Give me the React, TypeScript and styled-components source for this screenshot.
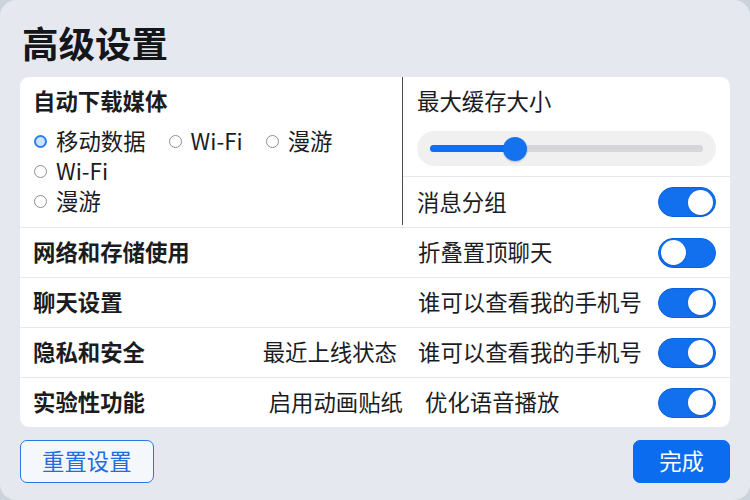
import React from "react";
import styled, { createGlobalStyle } from "styled-components";

const Global = createGlobalStyle`
  html, body { margin: 0; padding: 0; background: #cdd3da; }
  body { font-family: "Noto Sans CJK SC", "Noto Sans", sans-serif; color: #1b1c1f; }
  * { box-sizing: border-box; }
`;

const Page = styled.div`
  width: 750px;
  height: 500px;
  background: #e5e9ef;
  border-radius: 16px;
  padding: 19px 20px 0 20px;
  display: flex;
  flex-direction: column;
  overflow: hidden;
`;

const Title = styled.h1`
  margin: 0 0 0 2px;
  font-size: 36.5px;
  line-height: 48px;
  font-weight: 700;
  color: #15161a;
`;

const Card = styled.div`
  margin-top: 10px;
  background: #ffffff;
  border-radius: 9px;
  overflow: hidden;
`;

const Top = styled.div`
  display: grid;
  grid-template-columns: 383px 1fr;
  height: 150px;
`;

const LeftCell = styled.div`
  border-right: 1px solid #4a4b50;
  padding: 8px 13px 0 13px;
  margin-bottom: 2px;
`;

const RightCell = styled.div`
  display: flex;
  flex-direction: column;
`;

const SliderBlock = styled.div`
  height: 100px;
  border-bottom: 1px solid #e4e8ef;
  padding: 8px 14px 0 14px;
`;

const Heading = styled.div<{ $bold?: boolean }>`
  font-size: 22.4px;
  line-height: 30px;
  font-weight: ${(p) => (p.$bold ? 700 : 400)};
  white-space: nowrap;
`;

const RadioGroup = styled.div`
  margin-top: 10px;
  display: flex;
  flex-direction: column;
`;

const RadioLine = styled.div`
  display: flex;
  gap: 22px;
  height: 30px;
  align-items: center;
`;

const RadioItem = styled.label`
  display: flex;
  align-items: center;
  gap: 9px;
  font-size: 22.4px;
  line-height: 30px;
`;

const RadioDot = styled.span<{ $on?: boolean }>`
  width: 13px;
  height: 13px;
  border-radius: 50%;
  border: ${(p) => (p.$on ? "2px solid #2b7ff2" : "1.5px solid #8d8f94")};
  background: ${(p) => (p.$on ? "#cfe3ff" : "#ffffff")};
  flex: none;
  margin: 2px 0 0 1px;
`;

const SliderBox = styled.div`
  margin-top: 16px;
  height: 35px;
  border-radius: 18px;
  background: #f0f0f1;
  padding: 0 13px;
  display: flex;
  align-items: center;
`;

const Track = styled.div`
  position: relative;
  flex: 1;
  height: 7px;
  border-radius: 4px;
  background: #d6d6d8;
`;

const Fill = styled.div`
  position: absolute;
  left: 0;
  top: 0;
  bottom: 0;
  border-radius: 4px;
  background: #0f6ff0;
`;

const Knob = styled.div`
  position: absolute;
  top: 50%;
  width: 24px;
  height: 24px;
  margin: -12px 0 0 -12px;
  border-radius: 50%;
  background: #1472ef;
  box-shadow: 0 1px 2px rgba(0, 0, 0, 0.2);
`;

const SubRow = styled.div`
  flex: 1;
  display: flex;
  align-items: center;
  justify-content: space-between;
  padding: 0 14px 0 14px;
`;

const Row = styled.div`
  height: 50px;
  border-top: 1px solid #e4e8ef;
  display: flex;
  align-items: center;
  padding: 0 14px 0 13px;
`;

const RowLabel = styled.div`
  flex: 1;
  font-size: 22.4px;
  font-weight: 700;
  white-space: nowrap;
  margin-top: -3px;
`;

const Middle = styled.div<{ $gap: number }>`
  font-size: 22.4px;
  white-space: nowrap;
  margin-right: ${(p) => p.$gap}px;
  margin-top: -3px;
`;

const RightGroup = styled.div<{ $w: number }>`
  width: ${(p) => p.$w}px;
  display: flex;
  align-items: center;
  justify-content: space-between;
`;

const Text = styled.div`
  font-size: 22.4px;
  white-space: nowrap;
  margin-top: -3px;
`;

const ToggleTrack = styled.div<{ $on: boolean }>`
  width: 58px;
  height: 30px;
  border-radius: 15px;
  background: #1270ef;
  border: 1.5px solid #0c62dc;
  display: flex;
  align-items: center;
  justify-content: ${(p) => (p.$on ? "flex-end" : "flex-start")};
  padding: 0 2px;
  flex: none;
`;

const ToggleThumb = styled.div`
  width: 25px;
  height: 25px;
  border-radius: 50%;
  background: #ffffff;
  box-shadow: 0 1px 2px rgba(0, 40, 120, 0.25);
`;

const Footer = styled.div`
  margin-top: 13px;
  display: flex;
  justify-content: space-between;
`;

const Button = styled.button<{ $primary?: boolean }>`
  height: 43px;
  padding: 0 ${(p) => (p.$primary ? 25 : 21)}px 3px;
  border-radius: 7px;
  font-family: "Noto Sans CJK SC", "Noto Sans", sans-serif;
  font-size: 22.4px;
  line-height: 1;
  border: 1.5px solid ${(p) => (p.$primary ? "#0b6cef" : "#2a76e6")};
  background: ${(p) => (p.$primary ? "#0b6cef" : "#f4f7fb")};
  color: ${(p) => (p.$primary ? "#ffffff" : "#1f6de0")};
  cursor: pointer;
`;

const Toggle = ({ on }: { on: boolean }) => (
  <ToggleTrack $on={on}>
    <ToggleThumb />
  </ToggleTrack>
);

const Radio = ({ label, on }: { label: string; on?: boolean }) => (
  <RadioItem>
    <RadioDot $on={on} />
    {label}
  </RadioItem>
);

const rows = [
  { label: "网络和存储使用", right: "折叠置顶聊天", on: false, w: 298 },
  { label: "聊天设置", right: "谁可以查看我的手机号", on: true, w: 298 },
  { label: "隐私和安全", middle: "最近上线状态", gap: 21, right: "谁可以查看我的手机号", on: true, w: 298 },
  { label: "实验性功能", middle: "启用动画贴纸", gap: 22, right: "优化语音播放", on: true, w: 291 },
];

export default function App() {
  const value = 0.31;
  return (
    <>
      <Global />
      <Page>
        <Title>高级设置</Title>
        <Card>
          <Top>
            <LeftCell>
              <Heading $bold>自动下载媒体</Heading>
              <RadioGroup>
                <RadioLine>
                  <Radio label="移动数据" on />
                  <Radio label="Wi‑Fi" />
                  <Radio label="漫游" />
                </RadioLine>
                <RadioLine>
                  <Radio label="Wi‑Fi" />
                </RadioLine>
                <RadioLine>
                  <Radio label="漫游" />
                </RadioLine>
              </RadioGroup>
            </LeftCell>
            <RightCell>
              <SliderBlock>
                <Heading>最大缓存大小</Heading>
                <SliderBox>
                  <Track>
                    <Fill style={{ width: `${value * 100}%` }} />
                    <Knob style={{ left: `${value * 100}%` }} />
                  </Track>
                </SliderBox>
              </SliderBlock>
              <SubRow>
                <Text>消息分组</Text>
                <Toggle on />
              </SubRow>
            </RightCell>
          </Top>
          {rows.map((r) => (
            <Row key={r.label}>
              <RowLabel>{r.label}</RowLabel>
              {r.middle && <Middle $gap={r.gap ?? 21}>{r.middle}</Middle>}
              <RightGroup $w={r.w}>
                <Text>{r.right}</Text>
                <Toggle on={r.on} />
              </RightGroup>
            </Row>
          ))}
        </Card>
        <Footer>
          <Button>重置设置</Button>
          <Button $primary>完成</Button>
        </Footer>
      </Page>
    </>
  );
}
